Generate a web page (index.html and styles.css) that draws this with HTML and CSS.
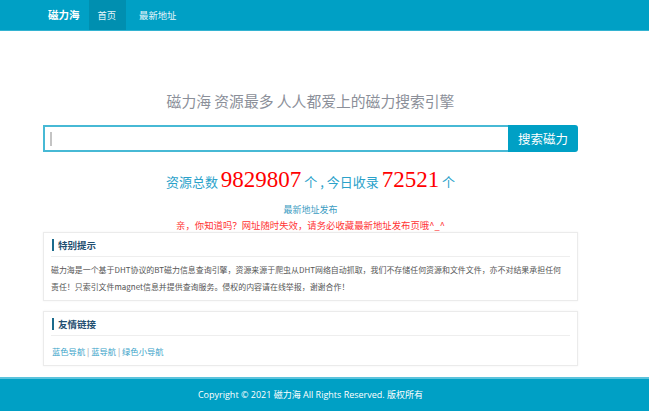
FILE: index.html
```html
<!DOCTYPE html>
<html lang="zh-CN">
<head>
<meta charset="utf-8">
<title>磁力海</title>
<link rel="stylesheet" href="styles.css">
</head>
<body>
<div class="page">
  <nav class="navbar">
    <a class="brand" href="#">磁力海</a>
    <a class="nav-item active" href="#">首页</a>
    <a class="nav-item" href="#">最新地址</a>
  </nav>
  <main class="container">
    <h1 class="title">磁力海 资源最多 人人都爱上的磁力搜索引擎</h1>
    <form class="search">
      <div class="search-input"><span class="caret"></span></div>
      <button class="search-btn" type="button">搜索磁力</button>
    </form>
    <p class="stats">资源总数 <span class="num">9829807</span> 个 , 今日收录 <span class="num">72521</span> 个</p>
    <p class="latest"><a href="#">最新地址发布</a></p>
    <p class="warning">亲，你知道吗？网址随时失效，请务必收藏最新地址发布页哦^_^</p>
    <section class="panel">
      <div class="panel-head"><h3>特别提示</h3></div>
      <div class="panel-body">
        <p class="notice">磁力海是一个基于DHT协议的BT磁力信息查询引擎，资源来源于爬虫从DHT网络自动抓取，我们不存储任何资源和文件文件，亦不对结果承担任何责任！只索引文件magnet信息并提供查询服务。侵权的内容请在线举报，谢谢合作！</p>
      </div>
    </section>
    <section class="panel panel-links">
      <div class="panel-head"><h3>友情链接</h3></div>
      <div class="panel-body links">
        <a href="#">蓝色导航</a> <span class="sep">|</span> <a href="#">蓝导航</a> <span class="sep">|</span> <a href="#">绿色小导航</a>
      </div>
    </section>
  </main>
  <footer class="footer">Copyright © 2021 磁力海 All Rights Reserved. 版权所有</footer>
</div>
</body>
</html>
```

FILE: styles.css
```css
* { box-sizing: border-box; }
html, body { margin: 0; padding: 0; background: #fff; }
body {
  font-family: "Noto Sans CJK SC", "Open Sans", sans-serif;
  color: #555;
}
a { text-decoration: none; }
p, h1, h3 { margin: 0; }

.page { width: 649px; }

.navbar {
  height: 31px;
  background: #00a0c5;
  border-bottom: 1px solid #33b3d1;
  display: flex;
  align-items: stretch;
  padding-left: 48px;
}
.brand {
  color: #fff;
  font-weight: bold;
  font-size: 10.5px;
  line-height: 30px;
  margin-right: 9px;
}
.nav-item {
  color: #e6f6fb;
  font-size: 9.3px;
  line-height: 30px;
  padding: 0 10px 0 9px;
}
.nav-item.active {
  background: #008fb0;
  margin-right: 4px;
}

.container {
  margin-left: 43px;
  width: 535px;
}

.title {
  margin-top: 60px;
  text-align: center;
  font-size: 14.8px;
  line-height: 20px;
  font-weight: normal;
  color: #8b8f99;
}

.search {
  display: flex;
  margin: 14px 0 0;
  height: 27px;
}
.search-input {
  flex: 1;
  border: 2px solid #47b9d5;
  border-right: none;
  display: flex;
  align-items: center;
  padding-left: 5px;
}
.caret {
  width: 2px;
  height: 14px;
  background: #c4c4c4;
}
.search-btn {
  width: 70px;
  border: none;
  background: #00a0c5;
  color: #fff;
  font-family: "Noto Sans CJK SC", sans-serif;
  font-size: 12.5px;
  border-radius: 0 3px 3px 0;
  padding: 0;
}

.stats {
  margin-top: 15px;
  text-align: center;
  font-size: 13px;
  line-height: 26px;
  height: 26px;
  color: #2ba2ca;
}
.num {
  font-family: "Liberation Serif", serif;
  font-size: 23px;
  color: #f00;
}

.latest {
  margin-top: 10px;
  text-align: center;
  font-size: 9px;
  line-height: 14px;
}
.latest a { color: #3a9cc2; }

.warning {
  margin-top: 1px;
  text-align: center;
  font-size: 9.4px;
  line-height: 14px;
  color: #f33;
}

.panel {
  border: 1px solid #ebebeb;
  box-shadow: 0 0 2px rgba(0,0,0,0.06);
  padding: 0 7px;
}
.panel-links { margin-top: 10px; }
.panel-head {
  padding: 6px 0 5px;
  border-bottom: 1px solid #eee;
}
.panel-head h3 {
  font-size: 9.5px;
  line-height: 12px;
  font-weight: bold;
  color: #1f4f70;
  border-left: 2px solid #1b6b8c;
  padding-left: 4px;
  margin-left: 1px;
}
.panel-body { padding: 5px 0 5px; }
.notice {
  font-size: 7.95px;
  line-height: 16.5px;
  color: #555;
  padding-right: 5px;
}
.links {
  padding: 7px 0 6px 1px;
  font-size: 8.3px;
  line-height: 16px;
}
.links a { color: #3aa3c9; }
.links .sep { color: #999; }

.footer {
  margin-top: 11px;
  background: #00a0c5;
  border-top: 2px solid #5cc3dc;
  height: 36px;
  line-height: 32px;
  text-align: center;
  padding-right: 28px;
  color: #fff;
  font-family: "Open Sans", "Noto Sans CJK SC", sans-serif;
  font-size: 9px;
}
```
